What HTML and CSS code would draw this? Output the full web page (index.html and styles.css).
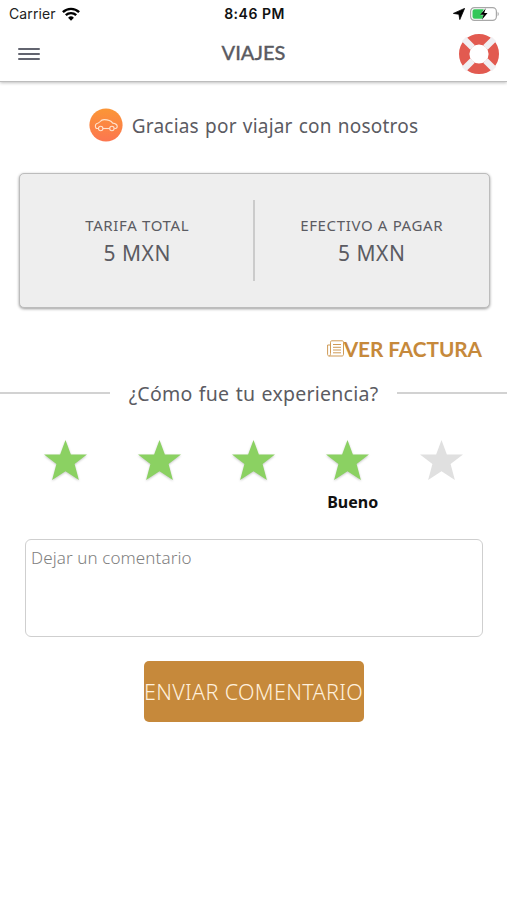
FILE: index.html
```html
<!DOCTYPE html>
<html lang="es">
<head>
    <meta charset="UTF-8">
    <meta name="viewport" content="width=device-width, initial-scale=1.0">
    <title>Viajes</title>
    <link rel="stylesheet" href="styles.css">
</head>
<body>

    <header class="header">
        <div class="status-bar">
            <div class="status-left">
                <span class="carrier">Carrier</span>
                <svg class="wifi" width="18" height="14" viewBox="0 0 18 14" fill="none" stroke="#000" stroke-width="2.4">
                    <path d="M0.9 5.2a11.6 11.6 0 0 1 16.2 0"/>
                    <path d="M3.8 8.2a7.5 7.5 0 0 1 10.4 0"/>
                    <path d="M9 13.7l-2.9-2.9a4.1 4.1 0 0 1 5.8 0z" fill="#000" stroke="none"/>
                </svg>
            </div>
            <span class="time">8:46 PM</span>
            <div class="status-right">
                <svg width="12" height="12" viewBox="0 0 12 12">
                    <path d="M11.6 0.4L6.8 11.6 5.9 6.3 0.4 5.4z" fill="#000" stroke="#000" stroke-width="0.8" stroke-linejoin="round"/>
                </svg>
                <svg width="30" height="14" viewBox="0 0 30 14">
                    <rect x="0.6" y="0.6" width="25.8" height="12.8" rx="3.8" fill="#fff" stroke="#a8a8a8" stroke-width="1.2"/>
                    <path d="M4.5 2.2h9.3l-3 6h2.6l-1.2 3.6H4.5a2 2 0 0 1-2-2V4.2a2 2 0 0 1 2-2z" fill="#34c759"/>
                    <path d="M15.8 1.3L10.2 7.8h3.4l-1.7 5 5.6-6.7h-3.3z" fill="#000"/>
                    <path d="M27.6 4.8a2.6 2.6 0 0 1 0 4.4z" fill="#a8a8a8"/>
                </svg>
            </div>
        </div>
        <nav class="navbar">
            <button class="menu-button" aria-label="Menú">
                <span></span>
                <span></span>
                <span></span>
            </button>
            <h1>VIAJES</h1>
            <button class="help-button" aria-label="Ayuda">
                <svg width="42" height="42" viewBox="0 0 42 42" fill="none">
                    <circle cx="21" cy="21" r="14.8" stroke="#e25a50" stroke-width="10.4"/>
                    <g stroke="#f1eff2" stroke-width="6.4">
                        <path d="M6 6l8.600 8.600"/>
                        <path d="M36 6l-8.600 8.600"/>
                        <path d="M6 36l8.600-8.600"/>
                        <path d="M36 36l-8.600-8.600"/>
                    </g>
                </svg>
            </button>
        </nav>
    </header>

    <main>
        <div class="thanks">
            <svg width="34" height="34" viewBox="0 0 34 34">
                <defs>
                    <linearGradient id="orange" x1="0" y1="0" x2="0" y2="1">
                        <stop offset="0" stop-color="#fb9636"/>
                        <stop offset="1" stop-color="#fc7650"/>
                    </linearGradient>
                </defs>
                <circle cx="17" cy="17" r="16.6" fill="url(#orange)"/>
                <g fill="none" stroke="#ffe3cd" stroke-width="1.1" stroke-linejoin="round">
                    <path d="M9.500 20.500H7.300c-1.300-1.300-1.300-3.500.2-4.800 1.700-.3 2.600-.8 3.700-2.200 1-1.400 2.200-1.900 4-1.900 4 0 6.400.6 8.500 3.500 2.500.3 4.400 1.200 4.500 3.200 0 1.300-.6 2.200-1.800 2.200h-1"/>
                    <path d="M13.900 20.500h6.800"/>
                    <circle cx="11.700" cy="20.500" r="2.200"/>
                    <circle cx="22.900" cy="20.500" r="2.200"/>
                </g>
            </svg>
            <span class="thanks-text">Gracias por viajar con nosotros</span>
        </div>

        <section class="fare-card">
            <div class="fare">
                <span class="fare-label">TARIFA TOTAL</span>
                <span class="fare-value">5 MXN</span>
            </div>
            <div class="fare">
                <span class="fare-label">EFECTIVO A PAGAR</span>
                <span class="fare-value">5 MXN</span>
            </div>
        </section>

        <a class="invoice-link" href="#">
            <svg width="17" height="17" viewBox="0 0 17 17" fill="none" stroke="#cf9a55" stroke-width="1">
                <path d="M3.500 13.500V2.300c0-1 .5-1.500 1.500-1.500h10c1 0 1.500.5 1.500 1.500v12c0 1-.5 1.700-1.500 1.700H2.200C1 16 .6 15.300.6 14.300V5h2.900"/>
                <path d="M3.500 13.500c0 1.500-.4 2.500-1.300 2.500M6 4.500h8M6 7.300h8M6 10h8M6 12.800h8"/>
            </svg>
            <span>VER FACTURA</span>
        </a>

        <div class="question">
            <span class="question-text">¿Cómo fue tu experiencia?</span>
        </div>

        <div class="rating">
            <div class="rating-item">
                <svg class="star filled" viewBox="0 0 44 42"><path d="M22 0l5.500 14.800H44L31.300 24.700 35.700 41 22 32 8.300 41l4.400-16.300L0 14.800h16.500z"/></svg>
            </div>
            <div class="rating-item">
                <svg class="star filled" viewBox="0 0 44 42"><path d="M22 0l5.500 14.800H44L31.300 24.700 35.700 41 22 32 8.300 41l4.400-16.300L0 14.800h16.500z"/></svg>
            </div>
            <div class="rating-item">
                <svg class="star filled" viewBox="0 0 44 42"><path d="M22 0l5.500 14.800H44L31.300 24.700 35.700 41 22 32 8.300 41l4.400-16.300L0 14.800h16.500z"/></svg>
            </div>
            <div class="rating-item">
                <svg class="star filled" viewBox="0 0 44 42"><path d="M22 0l5.500 14.800H44L31.300 24.700 35.700 41 22 32 8.300 41l4.400-16.300L0 14.800h16.500z"/></svg>
                <span class="rating-label">Bueno</span>
            </div>
            <div class="rating-item">
                <svg class="star" viewBox="0 0 44 42"><path d="M22 0l5.500 14.800H44L31.300 24.700 35.700 41 22 32 8.300 41l4.400-16.300L0 14.800h16.500z"/></svg>
            </div>
        </div>

        <textarea class="comment" placeholder="Dejar un comentario"></textarea>

        <button class="send-button">ENVIAR COMENTARIO</button>
    </main>

</body>
</html>
```
FILE: styles.css
```css
* {
    box-sizing: border-box;
}

body {
    margin: 0;
    min-height: 100vh;
    background-color: #fff;
    color: #5b5b62;
    font-family: "Noto Sans", "Open Sans", sans-serif;
}

button {
    border: none;
    background: none;
    padding: 0;
    cursor: pointer;
}

.header {
    height: 82px;
    border-bottom: 1px solid #bdbdbd;
    box-shadow: 0 1px 3px rgba(0, 0, 0, 0.25);
}

.status-bar {
    display: grid;
    grid-template-columns: 1fr auto 1fr;
    align-items: center;
    height: 27px;
    padding: 0 7px 0 9px;
    font-family: Inter, sans-serif;
    font-size: 14px;
    letter-spacing: 0.1px;
    color: #222;
}

.status-left,
.status-right {
    display: flex;
    align-items: center;
    gap: 6px;
}

.status-right {
    justify-content: flex-end;
    gap: 5px;
}

.time {
    font-weight: 600;
    letter-spacing: 0.5px;
    color: #111;
}

.navbar {
    display: grid;
    grid-template-columns: 1fr auto 1fr;
    align-items: center;
    height: 53px;
    padding: 0 7px 0 18px;
}

.menu-button {
    display: flex;
    flex-direction: column;
    gap: 3px;
    width: 22px;
}

.menu-button span {
    height: 2px;
    border-radius: 1px;
    background-color: #62646f;
}

h1 {
    margin: 0 11px 0 0;
    padding-bottom: 4px;
    font-family: Lato, sans-serif;
    font-size: 20px;
    font-weight: 500;
    line-height: 24px;
    -webkit-text-stroke: 0.3px #5b5b62;
}

.help-button {
    justify-self: end;
    height: 42px;
}

.thanks {
    display: flex;
    justify-content: center;
    align-items: center;
    gap: 9px;
    margin-top: 25px;
    height: 35px;
    white-space: nowrap;
}

.thanks-text,
.question-text {
    padding-top: 3px;
    font-size: 19px;
    letter-spacing: 0.2px;
    word-spacing: 1px;
}

.fare-card {
    display: flex;
    align-items: center;
    height: 135px;
    margin: 31px 17px 0 19px;
    background-color: #eee;
    border: 1px solid #bcbcbc;
    border-radius: 5px;
    box-shadow: 0 1px 3px rgba(0, 0, 0, 0.4);
}

.fare {
    flex: 1;
    display: flex;
    flex-direction: column;
    justify-content: center;
    align-items: center;
    height: 81px;
    padding-top: 2px;
}

.fare + .fare {
    margin-left: -2px;
    border-left: 2px solid #cbcbcb;
}

.fare-label {
    font-size: 15px;
    line-height: 24px;
    letter-spacing: 0.65px;
}

.fare-value {
    font-size: 21px;
    line-height: 33px;
    letter-spacing: 0.5px;
}

.invoice-link {
    display: flex;
    justify-content: flex-end;
    align-items: center;
    height: 26px;
    margin: 27px 25px 0 0;
    color: #c6893b;
    font-family: Lato, sans-serif;
    font-size: 20.8px;
    font-weight: 700;
    text-decoration: none;
}

.invoice-link span {
    letter-spacing: -0.05px;
}

.question {
    display: flex;
    align-items: center;
    gap: 19px;
    height: 30px;
    margin-top: 17px;
    white-space: nowrap;
}

.question-text {
    padding-top: 1px;
    font-size: 19.5px;
    letter-spacing: 0.25px;
}

.question::before,
.question::after {
    content: "";
    flex: 1;
    height: 2px;
    background-color: #d2d2d2;
}

.rating {
    display: grid;
    grid-template-columns: repeat(5, 1fr);
    height: 93px;
    padding: 32px 18px 0;
}

.rating-item {
    display: flex;
    flex-direction: column;
    align-items: center;
}

.star {
    width: 43px;
    height: 41px;
    fill: #e0e0e0;
}

.star.filled {
    fill: #8bd162;
    filter: drop-shadow(0 1px 1px rgba(0, 0, 0, 0.22));
}

.rating-label {
    margin: 9px 0 0 10px;
    font-size: 16px;
    font-weight: 700;
    line-height: 24px;
    color: #111;
}

.comment {
    display: block;
    width: 458px;
    height: 98px;
    margin: 38px 0 0 25px;
    padding: 6px 5px;
    border: 1px solid #cfcfcf;
    border-radius: 6px;
    resize: none;
    font-family: "Noto Sans", sans-serif;
    font-size: 17px;
    font-weight: 300;
    letter-spacing: 0.1px;
}

.comment::placeholder {
    color: #808080;
}

.send-button {
    display: block;
    width: 220px;
    height: 61px;
    margin: 24px auto 0;
    border-radius: 5px;
    background-color: #c6893b;
    color: #fff0dc;
    font-family: "Noto Sans", sans-serif;
    font-size: 21.5px;
    font-weight: 300;
    letter-spacing: 0.35px;
    white-space: nowrap;
}
```
